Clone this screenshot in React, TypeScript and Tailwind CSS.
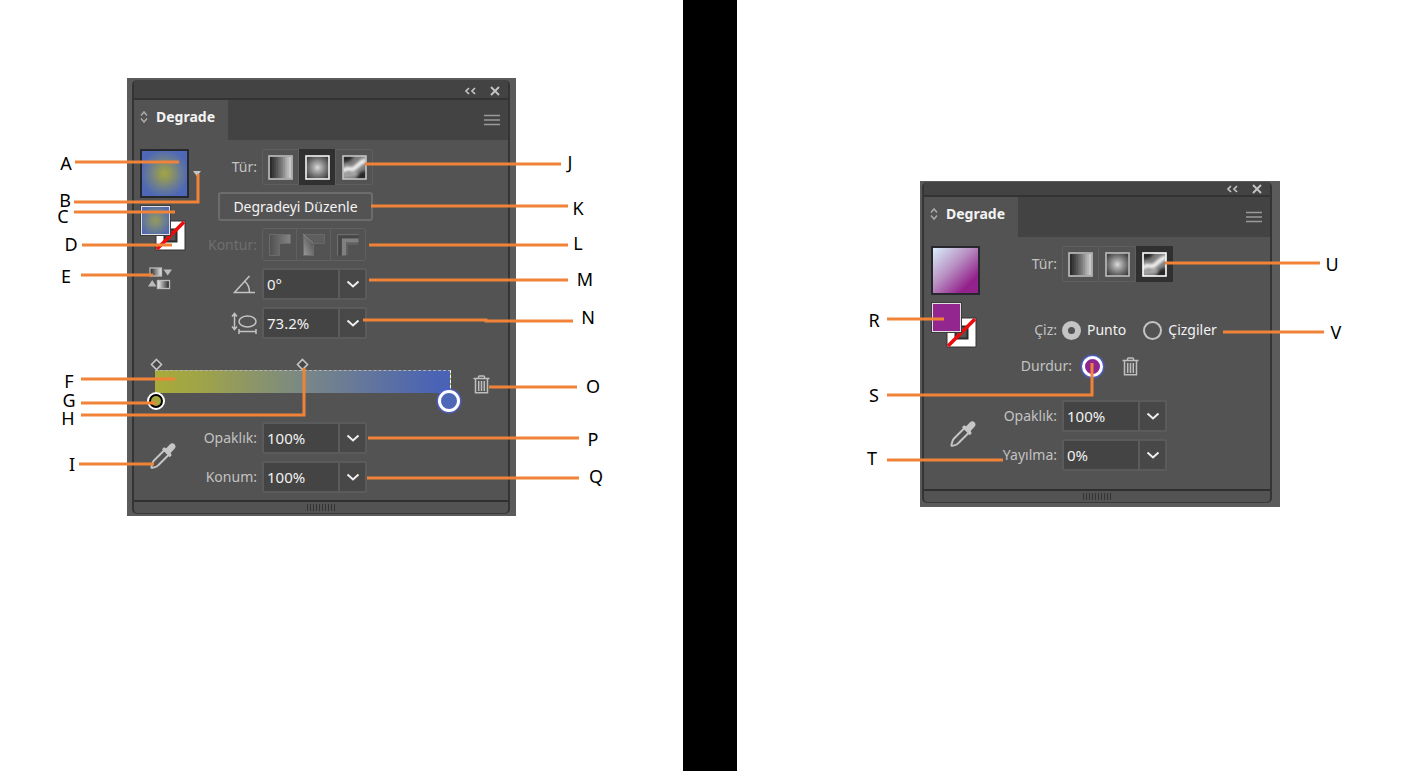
import { useId, useState, type ReactNode } from 'react';

type Callout = { letter: string; at: [number, number]; line: string };

const LEFT_CALLOUTS: Callout[] = [
  { letter: 'A', at: [66, 163], line: '75,162 179,162' },
  { letter: 'B', at: [65, 200], line: '74,202 198,202 198,174' },
  { letter: 'C', at: [63, 216], line: '74,212 175,212' },
  { letter: 'D', at: [71, 244], line: '82,245 172,245' },
  { letter: 'E', at: [66, 276], line: '81,275 153,275' },
  { letter: 'F', at: [69, 381], line: '81,379 175,379' },
  { letter: 'G', at: [69, 400], line: '81,403 156,403' },
  { letter: 'H', at: [68, 418], line: '81,415 304,415 304,368' },
  { letter: 'I', at: [72, 464], line: '79,464 154,464' },
  { letter: 'J', at: [570, 162], line: '365,164 561,164' },
  { letter: 'K', at: [578, 208], line: '371,206 568,206' },
  { letter: 'L', at: [578, 243], line: '369,245 568,245' },
  { letter: 'M', at: [585, 279], line: '369,280 568,280' },
  { letter: 'N', at: [588, 317], line: '363,320 486,320 486,321 573,321' },
  { letter: 'O', at: [593, 386], line: '489,387 577,387' },
  { letter: 'P', at: [593, 439], line: '368,438 579,438' },
  { letter: 'Q', at: [596, 476], line: '367,478 579,478' },
];

const RIGHT_CALLOUTS: Callout[] = [
  { letter: 'R', at: [137, 320], line: '150,319 207,319' },
  { letter: 'S', at: [137, 395], line: '150,395 355,395 355,363' },
  { letter: 'T', at: [135, 458], line: '150,460 266,460' },
  { letter: 'U', at: [595, 264], line: '428,263 583,263' },
  { letter: 'V', at: [599, 332], line: '486,332 587,332' },
];

function Callouts({ items }: { items: Callout[] }) {
  return (
    <div className="pointer-events-none absolute inset-0">
      <svg className="absolute inset-0 h-full w-full" fill="none" stroke="#f08338" strokeWidth="3" aria-hidden="true">
        {items.map((c) => (
          <polyline key={c.letter} points={c.line} />
        ))}
      </svg>
      {items.map((c) => (
        <span
          key={c.letter}
          className="absolute -translate-x-1/2 -translate-y-1/2 text-[18px] leading-[14px] text-black"
          style={{ left: c.at[0], top: c.at[1] }}
        >
          {c.letter}
        </span>
      ))}
    </div>
  );
}

function LinearIcon({ lit }: { lit?: boolean }) {
  const shades = ['#2c2c2c', '#393939', '#484848', '#585858', '#6a6a6a', '#7c7c7c', '#909090', '#a4a4a4', '#b6b6b6', '#c8c8c8'];
  return (
    <svg width="25" height="25" viewBox="0 0 25 25" aria-hidden="true">
      {shades.map((s, i) => (
        <rect key={s} x={2 + i * 2.1} y="2" width="2.3" height="21" fill={s} />
      ))}
      <rect x="1" y="1" width="23" height="23" fill="none" stroke={lit ? '#fff' : '#bdbdbd'} strokeWidth="1.6" />
    </svg>
  );
}

function RadialIcon({ lit }: { lit?: boolean }) {
  const id = useId();
  return (
    <svg width="25" height="25" viewBox="0 0 25 25" aria-hidden="true">
      <radialGradient id={id} cx="50%" cy="50%" r="68%">
        <stop offset="0" stopColor="#dcdcdc" />
        <stop offset="0.25" stopColor="#a8a8a8" />
        <stop offset="0.6" stopColor="#6c6c6c" />
        <stop offset="1" stopColor="#2e2e2e" />
      </radialGradient>
      <rect x="1" y="1" width="23" height="23" fill={`url(#${id})`} stroke={lit ? '#f4f4f4' : '#bdbdbd'} strokeWidth="1.6" />
    </svg>
  );
}

function FreeformIcon({ lit }: { lit?: boolean }) {
  const id = useId();
  return (
    <svg width="25" height="25" viewBox="0 0 25 25" aria-hidden="true">
      <defs>
        <filter id={id} x="-30%" y="-30%" width="160%" height="160%">
          <feGaussianBlur stdDeviation="1.7" />
        </filter>
        <clipPath id={`${id}c`}>
          <rect x="1" y="1" width="23" height="23" />
        </clipPath>
      </defs>
      <g clipPath={`url(#${id}c)`}>
        <rect width="25" height="25" fill="#7c7c7c" />
        <g filter={`url(#${id})`}>
          <path d="M0 0h13L8 6 0 8zM25 15v10H13l4-7z" fill="#262626" />
          <path d="M1 17C4 11 7 15 11 14S15 8 24 5" fill="none" stroke="#f4f4f4" strokeWidth="4.5" />
          <path d="M1 22c5-4 8 0 14-4" fill="none" stroke="#b0b0b0" strokeWidth="3" />
        </g>
      </g>
      <rect x="1" y="1" width="23" height="23" fill="none" stroke={lit ? '#fff' : '#c4c4c4'} strokeWidth="1.6" />
    </svg>
  );
}

function TypePicker({ initial }: { initial: number }) {
  const [active, setActive] = useState(initial);
  const types = [
    { name: 'Doğrusal', Icon: LinearIcon },
    { name: 'Dairesel', Icon: RadialIcon },
    { name: 'Serbest', Icon: FreeformIcon },
  ];
  return (
    <div role="group" aria-label="Tür" className="flex h-9 divide-x divide-[#5e5e5e] rounded-xs ring ring-[#5e5e5e] ring-inset">
      {types.map(({ name, Icon }, i) => (
        <button
          key={name}
          type="button"
          aria-label={name}
          aria-pressed={active === i}
          onClick={() => setActive(i)}
          className={`flex w-[37px] items-center justify-center ${active === i ? 'bg-[#303030]' : ''}`}
        >
          <Icon lit={active === i} />
        </button>
      ))}
    </div>
  );
}

function StrokePicker() {
  const id = useId();
  const grad = `url(#${id})`;
  return (
    <div role="group" aria-label="Kontur" className="flex h-[33px] divide-x divide-[#606060] rounded-xs border border-[#606060]">
      {['Kontur içinde', 'Kontur boyunca', 'Kontur üzerinde'].map((name, i) => (
        <button key={name} type="button" disabled aria-label={name} className="flex w-[34px] items-center justify-center">
          <svg width="24" height="24" viewBox="0 0 24 24" aria-hidden="true">
            <linearGradient id={i === 0 ? id : `${id}${i}`} x1="0" y1={i === 1 ? '1' : '0'} x2="1" y2="0">
              <stop offset="0" stopColor={i === 1 ? '#9a9a9a' : '#505050'} />
              <stop offset="1" stopColor={i === 1 ? '#484848' : '#858585'} />
            </linearGradient>
            {i === 0 && <path d="M1.500 22.500V1.500h21v9h-11v12z" fill={grad} stroke="#6b6b6b" />}
            {i === 1 && (
              <>
                <path d="M1.500 22.500V1.500l10 9v12z" fill={`url(#${id}1)`} stroke="#6b6b6b" />
                <path d="M1.500 1.500h21v9h-11z" fill="#5e5e5e" stroke="#686868" />
                <path d="M1 1l10 9" stroke="#888" />
              </>
            )}
            {i === 2 && (
              <>
                <path d="M1.500 22.500V1.500h21" fill="none" stroke="#6d6d6d" />
                <path d="M4 22.500V4h18.500" fill="none" stroke="#464646" strokeWidth="3" />
                <path d="M8 22.500V7.500h14.500" fill="none" stroke="#808080" strokeWidth="4" />
                <path d="M11 22V11h11" fill="none" stroke="#606060" strokeWidth="2" />
              </>
            )}
          </svg>
        </button>
      ))}
    </div>
  );
}

function Chevron() {
  return (
    <svg width="14" height="9" viewBox="0 0 14 9" fill="none" stroke="#f0f0f0" strokeWidth="2" aria-hidden="true">
      <path d="M1.500 1.500L7 6.500l5.500-5" />
    </svg>
  );
}

function ComboField({ id, value, name }: { id: string; value: string; name: string }) {
  const [text, setText] = useState(value);
  return (
    <div className="flex h-8 w-[105px] rounded-xs border-2 border-[#5b5b5b] bg-[#444]">
      <input
        id={id}
        aria-label={name}
        value={text}
        onChange={(e) => setText(e.target.value)}
        className="w-full min-w-0 flex-1 bg-transparent pl-[3px] text-[15px] text-[#f2f2f2] outline-none"
      />
      <button type="button" aria-label={`${name} seçenekleri`} className="flex w-[27px] items-center justify-center border-l-2 border-[#5b5b5b] bg-[#484848]">
        <Chevron />
      </button>
    </div>
  );
}

function Row({ label, height, children }: { label: ReactNode; height?: string; children: ReactNode }) {
  return (
    <div className={`flex items-center gap-[5px] ${height ?? ''}`}>
      <div className="flex w-[55px] shrink-0 justify-end whitespace-nowrap">{label}</div>
      {children}
    </div>
  );
}

function AngleIcon() {
  return (
    <svg width="24" height="19" viewBox="0 0 24 19" fill="none" stroke="#c4c4c4" strokeWidth="1.500" aria-hidden="true">
      <path d="M16.500 1L1.500 17.500H22M12 6.500c3 2.500 4.500 6.500 4.500 11" />
    </svg>
  );
}

function AspectIcon() {
  return (
    <svg width="26" height="22" viewBox="0 0 26 22" fill="none" stroke="#c4c4c4" strokeWidth="1.500" aria-hidden="true">
      <path d="M3.500 2v15M1 4.500L3.500 1.500 6 4.500M1 14.500l2.500 3 2.500-3M8 19.500h17M8 17v5M25 17v5" />
      <ellipse cx="16.500" cy="9.500" rx="8.500" ry="5.500" />
    </svg>
  );
}

function Trash() {
  return (
    <svg width="17" height="19" viewBox="0 0 17 19" fill="none" stroke="#bebebe" strokeWidth="1.500" aria-hidden="true">
      <path d="M.500 3.500h16M5.500 3V1.800Q5.500 1 6.500 1h4q1 0 1 .8V3M2.500 4v13.800h12V4M5.700 6v10M8.500 6v10M11.300 6v10" />
    </svg>
  );
}

function Eyedropper() {
  return (
    <svg width="26" height="27" viewBox="0 0 26 27" aria-hidden="true">
      <path d="M14.500 8L4 18.500C2 20.500 2.500 22 1.500 24.500q-.5 1.500 1 1.200C5 25 6.500 25.500 8.500 23L19 12.500" fill="none" stroke="#c6c6c6" strokeWidth="1.900" />
      <path d="M12 7.200l2-2 2.200 1L20 2.200c3-3 7.500 1.300 4.500 4.600L20.700 11l1 2.200-2 2z" fill="#c6c6c6" />
    </svg>
  );
}

function PreviewSwatch({ fill }: { fill: string }) {
  return <button type="button" aria-label="Degrade" className={`size-[49px] shrink-0 border-2 border-[#26282e] ${fill}`} />;
}

function FillStroke({ fill }: { fill: string }) {
  return (
    <div className="relative ml-px size-[45px]">
      <svg className="absolute right-0 bottom-0" width="31" height="31" viewBox="0 0 31 31" aria-hidden="true">
        <path fillRule="evenodd" d="M1 1h29v29H1zM9.500 9.500v12h12v-12z" fill="#fff" stroke="#333" />
        <rect x="9.500" y="9.500" width="12" height="12" fill="#535353" stroke="#2c2c2c" strokeWidth="2" />
        <path d="M2 29L29 2" stroke="#ee0a0a" strokeWidth="3.500" />
      </svg>
      <button type="button" aria-label="Dolgu" className={`absolute top-0 left-0 size-[29px] border border-[#e0e0e0] outline outline-[#3c3c3c] ${fill}`} />
    </div>
  );
}

function ReverseIcon() {
  const id = useId();
  return (
    <svg width="24" height="23" viewBox="0 0 24 23" aria-hidden="true">
      <linearGradient id={`${id}a`}>
        <stop offset="0" stopColor="#222" />
        <stop offset="1" stopColor="#e8e8e8" />
      </linearGradient>
      <linearGradient id={`${id}b`}>
        <stop offset="0" stopColor="#f0f0f0" />
        <stop offset="1" stopColor="#222" />
      </linearGradient>
      <rect x="2" y="1" width="11.500" height="8" fill={`url(#${id}a)`} stroke="#bbb" strokeWidth="1.300" />
      <rect x="9.500" y="13.500" width="12" height="8" fill={`url(#${id}b)`} stroke="#bbb" strokeWidth="1.300" />
      <path d="M15.500 2.500h8.500L19.700 8.500zM0 19.500h8.500L4.200 13z" fill="#bbb" />
    </svg>
  );
}

function Diamond() {
  return (
    <svg width="13" height="13" viewBox="0 0 13 13" aria-hidden="true">
      <path d="M6.500 1.500l5 5-5 5-5-5z" fill="#484848" stroke="#c4c4c4" strokeWidth="1.600" />
    </svg>
  );
}

function Panel({ frame, header, footer, children }: { frame: string; header: string; footer: string; children: ReactNode }) {
  return (
    <section className={`flex flex-col bg-[#5b5b5b] text-[#c2c2c2] ${frame}`}>
      <div className="flex flex-col rounded-[5px] border-x-2 border-[#343434] bg-[#535353]">
        <header className={`flex items-center justify-end gap-[14px] rounded-t-[4px] border-b-2 border-[#333] bg-[#434343] pr-2 ${header}`}>
          <button type="button" aria-label="Daralt">
            <svg width="12" height="8" viewBox="0 0 12 8" fill="none" stroke="#c4c4c4" strokeWidth="1.700" aria-hidden="true">
              <path d="M5 1L2 4l3 3M11 1L8 4l3 3" />
            </svg>
          </button>
          <button type="button" aria-label="Kapat">
            <svg width="10" height="10" viewBox="0 0 10 10" stroke="#c4c4c4" strokeWidth="1.900" aria-hidden="true">
              <path d="M1 1l8 8M9 1L1 9" />
            </svg>
          </button>
        </header>
        <div className="flex h-10 justify-between bg-[#434343]">
          <button type="button" className="flex w-[94px] items-center gap-2 bg-[#535353] pb-[6px] pl-[6px] text-[14px] font-bold text-[#f3f3f3]">
            <svg width="8" height="14" viewBox="0 0 8 14" fill="none" stroke="#aaa" strokeWidth="1.500" aria-hidden="true">
              <path d="M1 5.500L4 2l3 3.500M1 8.500L4 12l3-3.500" />
            </svg>
            Degrade
          </button>
          <button type="button" aria-label="Panel menüsü" className="pr-2">
            <svg width="16" height="12" viewBox="0 0 16 12" stroke="#9a9a9a" strokeWidth="1.700" aria-hidden="true">
              <path d="M0 1.500h16M0 6h16M0 10.500h16" />
            </svg>
          </button>
        </div>
        {children}
        <footer className={`flex items-center justify-center rounded-b-[4px] border-t-2 border-b border-t-[#303030] border-b-[#3a3a3a] ${footer}`}>
          <svg width="29" height="7" viewBox="0 0 29 7" stroke="#343434" aria-hidden="true">
            <path d="M.5 0v7M3.500 0v7M6.500 0v7M9.500 0v7M12.500 0v7M15.500 0v7M18.500 0v7M21.500 0v7M24.500 0v7M27.500 0v7" />
          </svg>
        </footer>
      </div>
    </section>
  );
}

function RadialPanel() {
  return (
    <Panel frame="w-[389px] pt-[2px] pr-[6px] pb-[2px] pl-[5px]" header="h-5 pt-[3px]" footer="h-[14px]">
      <div className="flex flex-col px-[6px] pt-[9px] pb-[7px]">
        <div className="flex">
          <div className="flex w-[62px] shrink-0 flex-col">
            <div className="flex items-center gap-1">
              <PreviewSwatch fill="bg-[radial-gradient(circle,#a3a545_0%,#8d9460_22%,#6b7d92_48%,#4f68b5_75%)]" />
              <button type="button" aria-label="Degrade listesi">
                <svg width="8" height="6" viewBox="0 0 8 6" aria-hidden="true">
                  <path d="M0 0h8L4 5.500z" fill="#c4c4c4" />
                </svg>
              </button>
            </div>
            <div className="mt-2">
              <FillStroke fill="bg-[radial-gradient(circle,#959a58_0%,#7a8880_35%,#5069b0_85%)]" />
            </div>
            <button type="button" aria-label="Degradeyi ters çevir" className="mt-4 ml-2 self-start">
              <ReverseIcon />
            </button>
          </div>
          <div className="flex flex-col gap-[7px]">
            <Row label="Tür:">
              <TypePicker initial={1} />
            </Row>
            <button type="button" className="ml-4 h-[29px] w-[155px] rounded-[3px] border-2 border-[#6c6c6c] leading-6 whitespace-nowrap text-[#f3f3f3]">
              Degradeyi Düzenle
            </button>
            <Row label={<span className="text-[#6f6f6f]">Kontur:</span>}>
              <StrokePicker />
            </Row>
            <Row label={<AngleIcon />}>
              <ComboField id="angle" name="Açı" value="0°" />
            </Row>
            <Row label={<AspectIcon />}>
              <ComboField id="aspect" name="En boy oranı" value="73.2%" />
            </Row>
          </div>
        </div>

        <div className="mt-[19px] flex items-center gap-[22px] pl-[15px]">
          <div className="relative h-[54px] w-[296px]">
            <div className="mt-3 h-[23px] border-t border-r border-dashed border-t-[#b4b4b4] border-r-white bg-[linear-gradient(90deg,#a9ab3a_0%,#a0a447_15%,#7a8885_50%,#4a63b4_95%)]" />
            <button type="button" aria-label="Başlangıç noktası" className="absolute top-0 -left-[5px]">
              <Diamond />
            </button>
            <button type="button" aria-label="Orta nokta" className="absolute top-0 left-[141px]">
              <Diamond />
            </button>
            <button type="button" aria-label="Renk durağı 1" className="absolute top-[34px] -left-2 size-[18px] rounded-full border-2 border-white bg-black p-[2px]">
              <span className="block size-full rounded-full bg-[#a5a73c]" />
            </button>
            <button type="button" aria-label="Renk durağı 2" className="absolute top-[32px] -right-[9px] size-[22px] rounded-full border-[3px] border-white bg-[#4d68b6] shadow-[0_0_2px_1px_#4c62f0]" />
          </div>
          <button type="button" aria-label="Durağı sil" className="mb-[2px]">
            <Trash />
          </button>
        </div>

        <div className="mt-[10px] flex items-center">
          <div className="w-[62px] shrink-0 pl-[10px]">
            <button type="button" aria-label="Renk seçici">
              <Eyedropper />
            </button>
          </div>
          <div className="flex flex-col gap-[7px]">
            <Row label={<label htmlFor="opacity-a">Opaklık:</label>}>
              <ComboField id="opacity-a" name="Opaklık" value="100%" />
            </Row>
            <Row label={<label htmlFor="location">Konum:</label>}>
              <ComboField id="location" name="Konum" value="100%" />
            </Row>
          </div>
        </div>
      </div>
    </Panel>
  );
}

function FreeformPanel() {
  const radio =
    'size-[19px] appearance-none rounded-full border-2 border-[#c4c4c4] checked:border-[6px] checked:bg-[#535353]';
  return (
    <Panel frame="w-[360px] pt-px pr-2 pb-[4px] pl-[2px]" header="h-[15px]" footer="h-[14px]">
      <div className="flex flex-col pt-[9px] pr-[5px] pb-[18px] pl-[7px]">
        <div className="flex">
          <div className="flex w-[71px] shrink-0 flex-col gap-2">
            <PreviewSwatch fill="bg-[linear-gradient(135deg,#d8effb_0%,#b78bc0_45%,#93228c_80%)]" />
            <FillStroke fill="bg-[#93268f]" />
          </div>
          <div className="flex flex-col justify-between">
            <Row label="Tür:" height="h-9">
              <TypePicker initial={2} />
            </Row>
            <fieldset>
              <Row label="Çiz:" height="h-9">
                <label className="flex items-center gap-[6px] text-[#f2f2f2]">
                  <input type="radio" name="draw" defaultChecked className={radio} />
                  Punto
                </label>
                <label className="ml-3 flex items-center gap-[6px] text-[#f2f2f2]">
                  <input type="radio" name="draw" className={radio} />
                  Çizgiler
                </label>
              </Row>
            </fieldset>
          </div>
        </div>
        <div className="flex h-9 items-center pl-[86px]">
          <span className="w-[55px] text-right">Durdur:</span>
          <button type="button" aria-label="Renk durağı" className="ml-[10px] size-[21px] rounded-full border-[3px] border-white bg-[#8d2790] shadow-[0_0_2px_1px_#4c62f0]" />
          <button type="button" aria-label="Durağı sil" className="ml-[19px]">
            <Trash />
          </button>
        </div>
        <div className="mt-4 flex items-center">
          <div className="w-[71px] shrink-0 pl-[19px]">
            <button type="button" aria-label="Renk seçici">
              <Eyedropper />
            </button>
          </div>
          <div className="flex flex-col gap-[7px]">
            <Row label={<label htmlFor="opacity-b">Opaklık:</label>}>
              <ComboField id="opacity-b" name="Opaklık" value="100%" />
            </Row>
            <Row label={<label htmlFor="spread">Yayılma:</label>}>
              <ComboField id="spread" name="Yayılma" value="0%" />
            </Row>
          </div>
        </div>
      </div>
    </Panel>
  );
}

export default function App() {
  return (
    <main className="grid min-h-screen grid-cols-[683fr_54px_672fr] bg-white font-['Noto_Sans','Open_Sans',sans-serif] text-[14px] leading-5">
      <div className="relative min-w-0 pt-[78px] pl-[127px]">
        <RadialPanel />
        <Callouts items={LEFT_CALLOUTS} />
      </div>
      <div className="bg-black" />
      <div className="relative min-w-0 pt-[181px] pl-[183px]">
        <FreeformPanel />
        <Callouts items={RIGHT_CALLOUTS} />
      </div>
    </main>
  );
}
